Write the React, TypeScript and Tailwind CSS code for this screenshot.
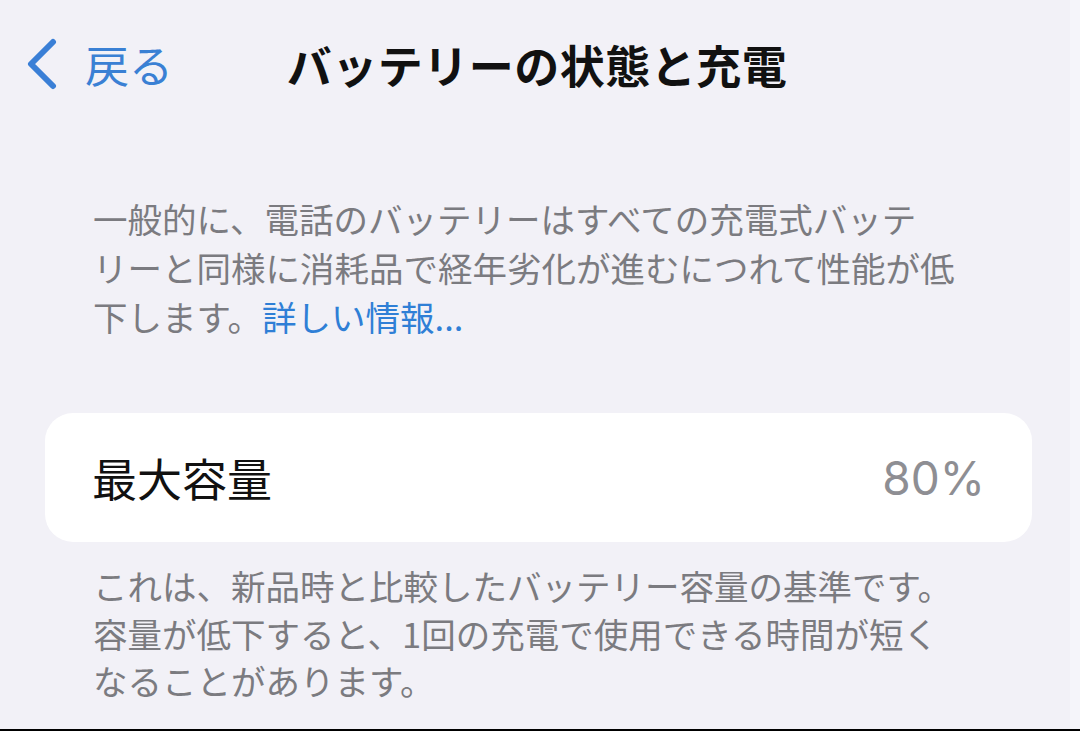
import React from 'react';

const jp = { fontFamily: '"Noto Sans CJK JP", "Noto Sans", sans-serif' };

const BackChevron = () => (
    <svg width="34" height="52" viewBox="0 0 34 52" fill="none">
        <path d="M28 4 L6 26 L28 48" stroke="#3a7fd6" strokeWidth="6" strokeLinecap="round" strokeLinejoin="round" />
    </svg>
);

const NavBar = () => {
    return (
        <div className="grid grid-cols-[1fr_auto_1fr] items-center h-[100px] pt-[28px]">
            <div className="flex items-center pl-[25px] gap-[26px]">
                <BackChevron />
                <span className="text-[44px] leading-none text-[#3a80d4]" style={jp}>戻る</span>
            </div>
            <h1 className="text-[45px] font-bold leading-none text-[#111111] tracking-[0.5px] pl-[4px]" style={jp}>
                バッテリーの状態と充電
            </h1>
            <div />
        </div>
    );
};

export default function App() {
    return (
        <div className="w-[1080px] h-[731px] flex flex-col bg-[#f2f1f7] overflow-hidden" style={jp}>
            <div className="flex-1 flex">
                <div className="flex-1 flex flex-col">
                    <NavBar />

                    <p className="mt-[94px] ml-[93px] text-[34.5px] leading-[49px] text-[#7b7b80]">
                        一般的に、電話のバッテリーはすべての充電式バッテ<br />
                        リーと同様に消耗品で経年劣化が進むにつれて性能が低<br />
                        下します。<span className="text-[#2f7fd6]">詳しい情報...</span>
                    </p>

                    <div className="mt-[72px] ml-[45px] w-[987px] h-[129px] bg-white rounded-[28px] flex items-center justify-between px-[47px]">
                        <span className="text-[45px] leading-none text-[#111111]">最大容量</span>
                        <span className="text-[46px] leading-none text-[#8e8e93]" style={{ fontFamily: 'Inter, "Liberation Sans", sans-serif' }}>80%</span>
                    </div>

                    <p className="mt-[20px] ml-[93px] text-[34.5px] leading-[47.5px] text-[#7b7b80]">
                        これは、新品時と比較したバッテリー容量の基準です。<br />
                        容量が低下すると、1回の充電で使用できる時間が短く<br />
                        なることがあります。
                    </p>
                </div>
                <div className="w-[10px] bg-[#f5f5fa]" />
            </div>
            <div className="h-[2px] bg-black" />
        </div>
    );
}
